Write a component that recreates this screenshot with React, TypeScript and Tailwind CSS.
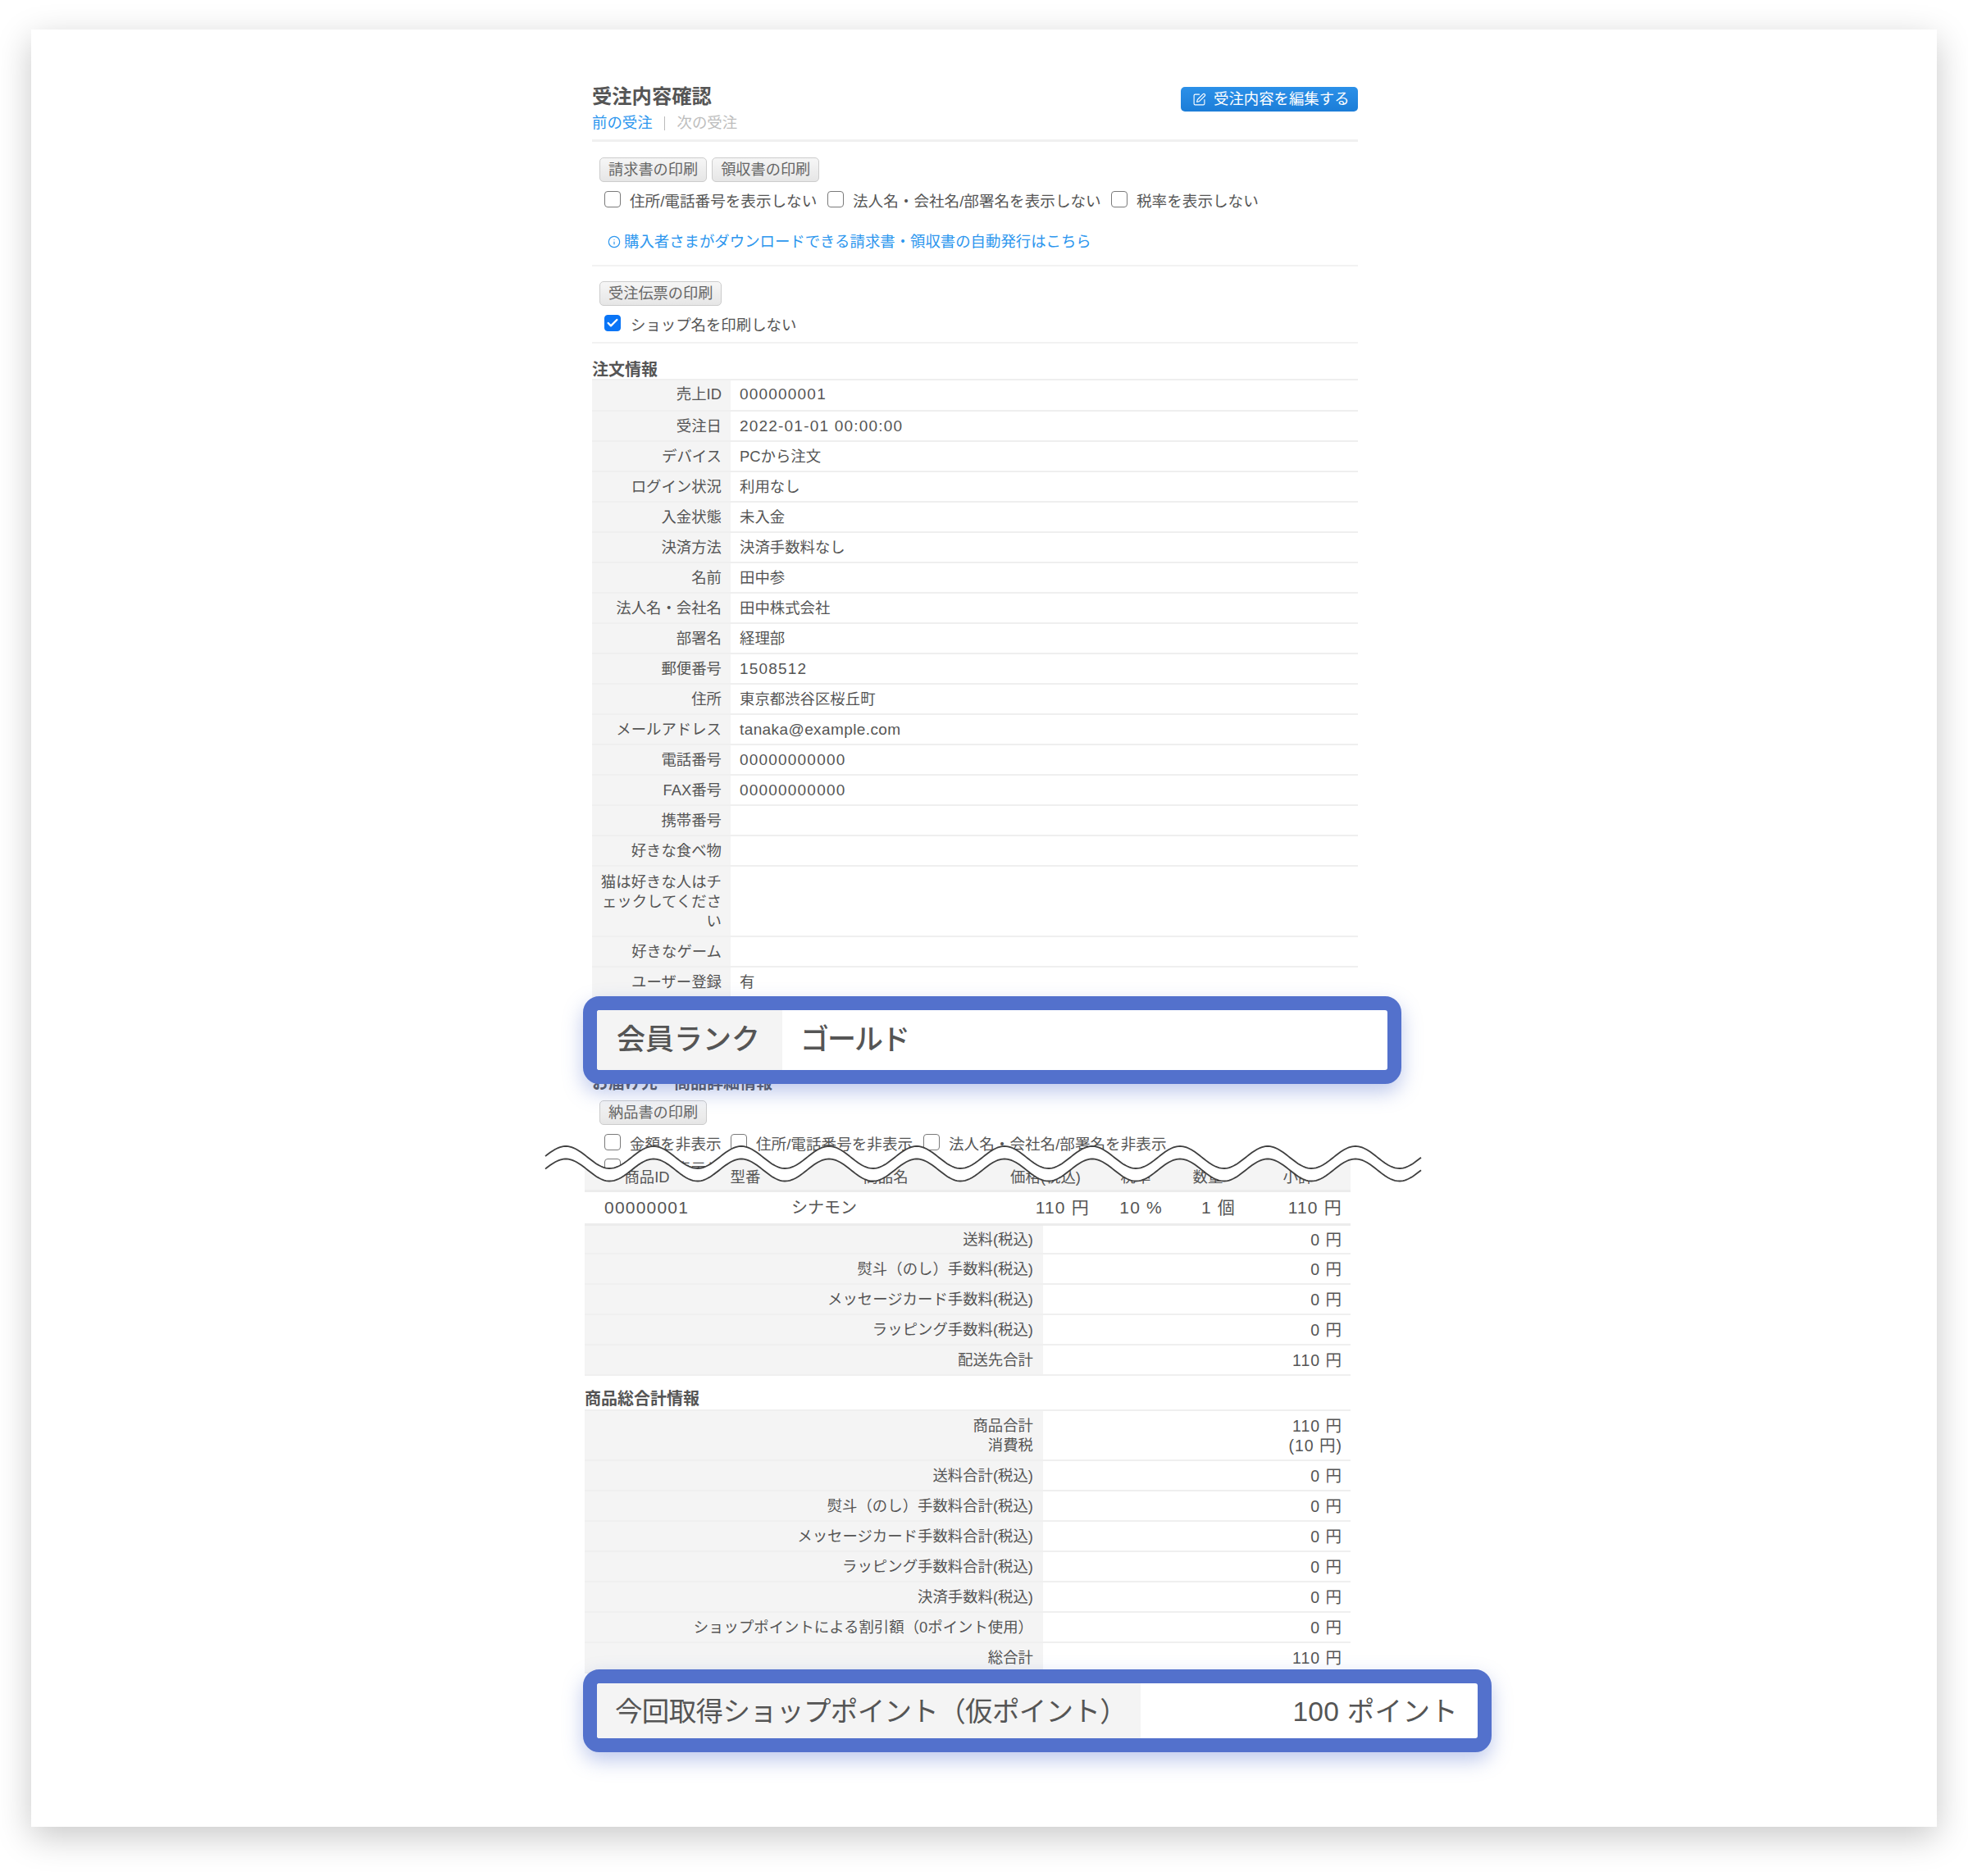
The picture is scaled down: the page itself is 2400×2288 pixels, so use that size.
import React from "react";
import { SquarePen, Info, Check } from "lucide-react";

const D = "text-[19px] tracking-[1.2px]";

const orderRows: [string, string, string?][] = [
  ["売上ID", "000000001", D],
  ["受注日", "2022-01-01 00:00:00", D],
  ["デバイス", "PCから注文"],
  ["ログイン状況", "利用なし"],
  ["入金状態", "未入金"],
  ["決済方法", "決済手数料なし"],
  ["名前", "田中参"],
  ["法人名・会社名", "田中株式会社"],
  ["部署名", "経理部"],
  ["郵便番号", "1508512", D],
  ["住所", "東京都渋谷区桜丘町"],
  ["メールアドレス", "tanaka@example.com", "text-[19px] tracking-[0.4px]"],
  ["電話番号", "00000000000", D],
  ["FAX番号", "00000000000", D],
  ["携帯番号", ""],
  ["好きな食べ物", ""],
];

const shippingRows: [string, string][] = [
  ["送料(税込)", "0 円"],
  ["熨斗（のし）手数料(税込)", "0 円"],
  ["メッセージカード手数料(税込)", "0 円"],
  ["ラッピング手数料(税込)", "0 円"],
  ["配送先合計", "110 円"],
];

const totalRows: [string, string][] = [
  ["送料合計(税込)", "0 円"],
  ["熨斗（のし）手数料合計(税込)", "0 円"],
  ["メッセージカード手数料合計(税込)", "0 円"],
  ["ラッピング手数料合計(税込)", "0 円"],
  ["決済手数料(税込)", "0 円"],
  ["ショップポイントによる割引額（0ポイント使用）", "0 円"],
  ["総合計", "110 円"],
];

function PrintButton({ children }: { children: React.ReactNode }) {
  return (
    <button className="h-[30px] px-[10px] rounded-[5px] border border-[#cccccc] bg-gradient-to-b from-[#f6f6f6] to-[#e6e6e6] text-[#666666] text-[18.2px] leading-[26px] whitespace-nowrap">
      {children}
    </button>
  );
}

function Box({ checked = false }: { checked?: boolean }) {
  return (
    <span className="relative inline-flex w-5 h-5 shrink-0">
      <input
        type="checkbox"
        readOnly
        checked={checked}
        className="appearance-none w-5 h-5 rounded-[4px] border-[1.5px] border-[#7a7a7a] bg-white checked:bg-[#0a75f6] checked:border-[#0a75f6]"
      />
      {checked && (
        <Check size={16} strokeWidth={3.5} color="#ffffff" className="absolute left-[2px] top-[2px]" />
      )}
    </span>
  );
}

function Opt({ label, gap }: { label: string; gap: string }) {
  return (
    <span className={`flex items-start ${gap}`}>
      <Box />
      <span className="ml-[11px] text-[18.6px] leading-[24px] mt-[1px] whitespace-nowrap">{label}</span>
    </span>
  );
}

const MID1 = 1411.5;
const OFFSET = 15.5;
const AMP = 13.5;

function waveXs() {
  const xs: number[] = [];
  for (let x = 665; x <= 1734; x += 2) xs.push(x);
  return xs;
}
function waveY(x: number, m: number) {
  return m - AMP * Math.cos((2 * Math.PI * (x - 690)) / 107);
}

function wavePaths() {
  const xs = waveXs();
  const line = (m: number) => xs.map((x) => `${x},${waveY(x, m).toFixed(2)}`).join(" L");
  const backLine = (m: number) =>
    [...xs].reverse().map((x) => `${x},${waveY(x, m).toFixed(2)}`).join(" L");
  return {
    l1: `M${line(MID1)}`,
    l2: `M${line(MID1 + OFFSET)}`,
    band: `M${line(MID1)} L${backLine(MID1 + OFFSET)} Z`,
    mask: `M665,1380 L1734,1380 L${backLine(MID1 + OFFSET)} Z`,
  };
}

/* clip for the block that lies above the tear, in the block's own coordinates */
function aboveTearClip(left: number, top: number) {
  const xs = [...waveXs()].reverse();
  const pts = xs.map((x) => `${x - left} ${(waveY(x, MID1 + OFFSET) - top).toFixed(2)}`).join(" L");
  return `path('M${665 - left} -20 L${1734 - left} -20 L${pts} Z')`;
}

function Mask() {
  const { mask } = wavePaths();
  return (
    <svg className="absolute left-[0px] top-[0px] z-[1]" width="2324" height="2192" viewBox="38 36 2324 2192">
      <path d={mask} fill="#ffffff" />
    </svg>
  );
}

function Band() {
  const { l1, l2, band } = wavePaths();
  return (
    <svg className="absolute left-[0px] top-[0px] z-[3] pointer-events-none" width="2324" height="2192" viewBox="38 36 2324 2192">
      <path d={band} fill="#ffffff" />
      <path d={l1} fill="none" stroke="#3f3f3f" strokeWidth="1.8" />
      <path d={l2} fill="none" stroke="#3f3f3f" strokeWidth="1.8" />
    </svg>
  );
}

function SumRow({ label, value, first = false }: { label: string; value: string; first?: boolean }) {
  return (
    <div className="flex border-b-2 border-[#efefef]">
      <div className={`w-[559px] shrink-0 bg-[#f4f4f4] text-right pr-[12px] ${first ? "pt-[5px] pb-[4px]" : "pt-[6px] pb-[5px]"}`}>
        {label}
      </div>
      <div className={`flex-1 text-right pr-[10px] text-[19.5px] tracking-[1px] ${first ? "pt-[5px] pb-[4px]" : "pt-[6px] pb-[5px]"}`}>
        {value}
      </div>
    </div>
  );
}

export default function App() {
  return (
    <div className="w-[2400px] h-[2288px] bg-white pt-[36px] pl-[38px] font-['Liberation_Sans','Noto_Sans_CJK_JP',sans-serif] text-[#555555] text-[18.4px] leading-[24px]">
      <div className="relative w-[2324px] h-[2192px] bg-white shadow-[0_12px_40px_rgba(0,0,0,0.22)]">
        <div className="ml-[684px] w-[934px] pt-[66px]">
          {/* header */}
          <div className="flex items-start justify-between">
            <div>
              <h1 className="text-[24.3px] leading-[32px] font-bold">受注内容確認</h1>
              <div className="mt-[4px] flex items-center text-[18.4px] leading-[24px]">
                <span className="text-[#2c96ee]">前の受注</span>
                <span className="ml-[14px] mr-[15px] w-px h-[17px] bg-[#bbbbbb]" />
                <span className="text-[#bdbdbd]">次の受注</span>
              </div>
            </div>
            <button className="mt-[4px] w-[216px] h-[30px] rounded-[5px] bg-gradient-to-b from-[#2b90e8] to-[#1b7dd8] text-white flex items-center pl-[14px] text-[18.4px] whitespace-nowrap">
              <SquarePen size={17} strokeWidth={1.6} />
              <span className="ml-[9px]">受注内容を編集する</span>
            </button>
          </div>
          <div className="mt-[8px] h-[3px] bg-[#f0f0f0]" />

          {/* invoice */}
          <div className="mt-[19px] pl-[9px] flex gap-[6px]">
            <PrintButton>請求書の印刷</PrintButton>
            <PrintButton>領収書の印刷</PrintButton>
          </div>
          <div className="mt-[11px] pl-[15px] flex">
            <Opt label="住所/電話番号を表示しない" gap="w-[272px]" />
            <Opt label="法人名・会社名/部署名を表示しない" gap="w-[346px]" />
            <Opt label="税率を表示しない" gap="" />
          </div>
          <div className="mt-[25px] pl-[19px] flex items-center text-[#2c96ee]">
            <Info size={16} strokeWidth={1.8} />
            <span className="ml-[4px]">購入者さまがダウンロードできる請求書・領収書の自動発行はこちら</span>
          </div>
          <div className="mt-[16px] h-[2px] bg-[#f2f2f2]" />

          {/* slip */}
          <div className="mt-[18px] pl-[9px] flex">
            <PrintButton>受注伝票の印刷</PrintButton>
          </div>
          <div className="mt-[11px] pl-[15px] flex items-start">
            <Box checked />
            <span className="ml-[12px] mt-[1px]">ショップ名を印刷しない</span>
          </div>
          <div className="mt-[8px] h-[2px] bg-[#f2f2f2]" />

          {/* order info */}
          <h2 className="mt-[20px] h-[23px] text-[20px] leading-[24px] font-bold">注文情報</h2>
          <div className="border-t-2 border-[#efefef]">
            {orderRows.map(([k, v, t], i) => (
              <div key={k} className="flex border-b-2 border-[#efefef]">
                <div className={`w-[169px] shrink-0 bg-[#f4f4f4] text-right pr-[11px] ${i === 0 ? "pt-[5px] pb-[7px]" : "pt-[6px] pb-[5px]"}`}>
                  {k}
                </div>
                <div className={`flex-1 pl-[11px] ${t ?? ""} ${i === 0 ? "pt-[5px] pb-[7px]" : "pt-[6px] pb-[5px]"}`}>
                  {v}
                </div>
              </div>
            ))}
            <div className="flex border-b-2 border-[#efefef]">
              <div className="w-[169px] shrink-0 bg-[#f4f4f4] text-right pl-[10px] pr-[11px] pt-[7px] pb-[5px]">
                猫は好きな人はチェックしてください
              </div>
              <div className="flex-1" />
            </div>
            <div className="flex border-b-2 border-[#efefef]">
              <div className="w-[169px] shrink-0 bg-[#f4f4f4] text-right pr-[11px] pt-[6px] pb-[5px]">好きなゲーム</div>
              <div className="flex-1" />
            </div>
            <div className="flex">
              <div className="w-[169px] shrink-0 bg-[#f4f4f4] text-right pr-[11px] pt-[6px] pb-[7px]">ユーザー登録</div>
              <div className="flex-1 pl-[11px] pt-[6px]">有</div>
            </div>
          </div>

          {/* delivery */}
          <h2 className="mt-[90px] h-[28px] text-[20px] leading-[28px] font-bold">お届け先　商品詳細情報</h2>
          <div className="mt-[7px] pl-[9px] flex">
            <PrintButton>納品書の印刷</PrintButton>
          </div>
          <div
            className="relative z-[2] mt-[11px] pl-[15px]"
            style={{ clipPath: aboveTearClip(722, 1382) }}
          >
            <div className="flex">
              <Opt label="金額を非表示" gap="w-[154px]" />
              <Opt label="住所/電話番号を非表示" gap="w-[235px]" />
              <Opt label="法人名・会社名/部署名を非表示" gap="" />
            </div>
            <div className="mt-[5px] flex">
              <Opt label="税率を表示しない" gap="" />
            </div>
          </div>

          <div className="-ml-[9px] -mt-[32px] w-[934px]">
            <div className="grid grid-cols-[152px_88px_254px_136px_84px_92px_128px] h-[48px] bg-[#f4f4f4] border-b-[3px] border-[#ececec] text-center items-end pb-[3px]">
              <div>商品ID</div>
              <div>型番</div>
              <div>商品名</div>
              <div>価格(税込)</div>
              <div>税率</div>
              <div>数量</div>
              <div>小計</div>
            </div>
            <div className="grid grid-cols-[152px_88px_254px_136px_84px_92px_128px] h-[41px] items-center border-b-[3px] border-[#ececec] text-[21px] tracking-[1.2px]">
              <div className="pl-[24px]">00000001</div>
              <div />
              <div className="pl-[12px] text-[20px] tracking-normal">シナモン</div>
              <div className="text-right pr-[14px]">110 円</div>
              <div className="text-right pr-[9px]">10 %</div>
              <div className="text-right pr-[12px]">1 個</div>
              <div className="text-right pr-[10px]">110 円</div>
            </div>
            {shippingRows.map(([k, v], i) => (
              <SumRow key={k} label={k} value={v} first={i === 0} />
            ))}

            <h2 className="mt-[16px] h-[25px] text-[20px] leading-[24px] font-bold">商品総合計情報</h2>
            <div className="border-t-2 border-[#efefef]">
              <div className="flex border-b-2 border-[#efefef]">
                <div className="w-[559px] shrink-0 bg-[#f4f4f4] text-right pr-[12px] pt-[6px] pb-[5px]">
                  商品合計
                  <br />
                  消費税
                </div>
                <div className="flex-1 text-right pr-[10px] pt-[6px] pb-[5px] text-[19.5px] tracking-[1px]">
                  110 円
                  <br />
                  (10 円)
                </div>
              </div>
              {totalRows.map(([k, v]) => (
                <SumRow key={k} label={k} value={v} />
              ))}
            </div>
          </div>
        </div>

        <Mask />
        <Band />

        {/* highlight: member rank */}
        <div className="absolute z-[4] left-[673px] top-[1179px] w-[998px] h-[107px] rounded-[20px] border-[17px] border-[#5371cc] bg-white overflow-hidden shadow-[0_10px_24px_rgba(83,113,204,0.38)] flex text-[35px] leading-[72px] font-medium">
          <div className="w-[226px] bg-[#f4f4f4] pl-[24px] whitespace-nowrap">会員ランク</div>
          <div className="pl-[22px] tracking-[-2px] whitespace-nowrap">ゴールド</div>
        </div>

        {/* highlight: shop points */}
        <div className="absolute z-[4] left-[673px] top-[2000px] w-[1108px] h-[101px] rounded-[20px] border-[17px] border-[#5371cc] bg-white overflow-hidden shadow-[0_10px_24px_rgba(83,113,204,0.38)] flex text-[33.5px] leading-[69px]">
          <div className="w-[663px] bg-[#f4f4f4] pl-[22px] tracking-[-0.65px] whitespace-nowrap">今回取得ショップポイント（仮ポイント）</div>
          <div className="flex-1 text-right pr-[24px] tracking-[0.3px] whitespace-nowrap">100 ポイント</div>
        </div>
      </div>
    </div>
  );
}
